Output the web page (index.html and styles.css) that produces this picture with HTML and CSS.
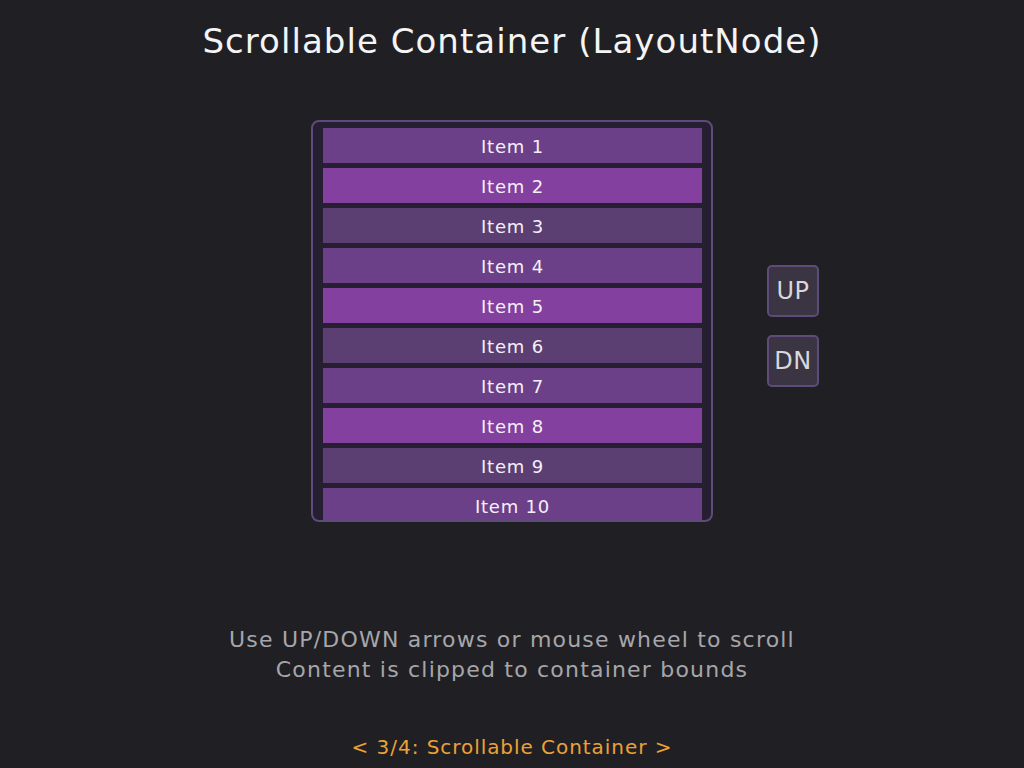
FILE: index.html
```html
<!DOCTYPE html>
<html>
<head>
<meta charset="utf-8">
<link rel="stylesheet" href="styles.css">
</head>
<body>
<h1 class="title">Scrollable Container (LayoutNode)</h1>
<div class="stage">
  <div class="spacer"></div>
  <div class="scroller">
    <div class="item tone-a">Item 1</div>
    <div class="item tone-b">Item 2</div>
    <div class="item tone-c">Item 3</div>
    <div class="item tone-a">Item 4</div>
    <div class="item tone-b">Item 5</div>
    <div class="item tone-c">Item 6</div>
    <div class="item tone-a">Item 7</div>
    <div class="item tone-b">Item 8</div>
    <div class="item tone-c">Item 9</div>
    <div class="item tone-a">Item 10</div>
  </div>
  <div class="controls">
    <div class="btn">UP</div>
    <div class="btn">DN</div>
  </div>
</div>
<div class="help">
  <p>Use UP/DOWN arrows or mouse wheel to scroll</p>
  <p>Content is clipped to container bounds</p>
</div>
<div class="footer">&lt; 3/4: Scrollable Container &gt;</div>
</body>
</html>
```
FILE: styles.css
```css
html, body {
  margin: 0;
  padding: 0;
}
body {
  width: 1024px;
  height: 768px;
  background: #202024;
  font-family: "DejaVu Sans", sans-serif;
  color: #ffffff;
  overflow: hidden;
}
.title {
  margin: 0;
  padding-top: 21px;
  height: 40px;
  line-height: 40px;
  font-size: 34px;
  letter-spacing: 1.05px;
  font-weight: normal;
  text-align: center;
  color: #f4f4f4;
}
.stage {
  margin-top: 59px;
  display: grid;
  grid-template-columns: 1fr 402px 1fr;
}
.scroller {
  box-sizing: border-box;
  width: 402px;
  height: 402px;
  border: 2px solid #5f4b7a;
  border-radius: 8px;
  background: #261f32;
  padding: 6px 9px 0 10px;
  overflow: hidden;
  display: flex;
  flex-direction: column;
  gap: 5px;
}
.item {
  flex: 0 0 35px;
  height: 35px;
  line-height: 38px;
  text-align: center;
  font-size: 18px;
  letter-spacing: 0.8px;
  color: #f4f0f6;
}
.tone-a { background: #6c4089; }
.tone-b { background: #84409f; }
.tone-c { background: #5b3f73; }
.controls {
  padding-left: 54px;
  padding-top: 145px;
  display: flex;
  flex-direction: column;
  gap: 18px;
}
.btn {
  box-sizing: border-box;
  width: 52px;
  height: 52px;
  border: 2px solid #5f4b7a;
  border-radius: 5px;
  background: #3a3443;
  color: #d8d8dc;
  font-size: 24px;
  letter-spacing: 0.5px;
  display: flex;
  align-items: center;
  justify-content: center;
}
.help {
  margin-top: 103px;
  text-align: center;
  color: #a6a6aa;
  font-size: 22px;
  letter-spacing: 1.2px;
}
.help p {
  margin: 0;
  height: 30px;
  line-height: 30px;
}
.footer {
  margin-top: 50px;
  text-align: center;
  color: #eca234;
  font-size: 20px;
  letter-spacing: 0.95px;
  line-height: 24px;
}
```
